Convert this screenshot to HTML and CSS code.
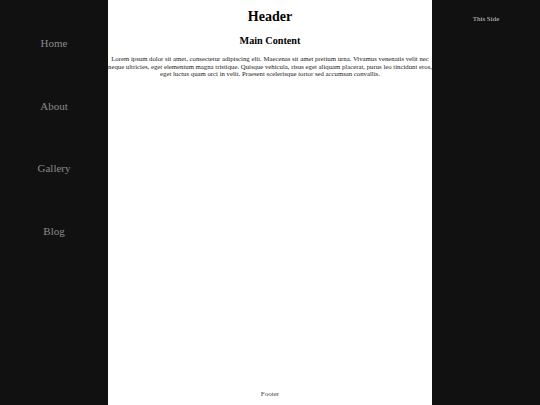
FILE: index.html
```html
<!DOCTYPE html>
<html>
<head>
<meta charset="utf-8">
<link rel="stylesheet" href="styles.css">
</head>
<body>
<div class="layout">
  <nav class="nav">
    <a class="nav-item" href="#">Home</a>
    <a class="nav-item" href="#">About</a>
    <a class="nav-item" href="#">Gallery</a>
    <a class="nav-item" href="#">Blog</a>
  </nav>
  <main class="main">
    <h1 class="title">Header</h1>
    <h2 class="subtitle">Main Content</h2>
    <p class="text">Lorem ipsum dolor sit amet, consectetur adipiscing elit. Maecenas sit amet pretium urna. Vivamus venenatis velit nec neque ultricies, eget elementum magna tristique. Quisque vehicula, risus eget aliquam placerat, purus leo tincidunt eros, eget luctus quam orci in velit. Praesent scelerisque tortor sed accumsan convallis.</p>
    <footer class="footer">Footer</footer>
  </main>
  <aside class="side">This Side</aside>
</div>
</body>
</html>
```
FILE: styles.css
```css
html, body {
  margin: 0;
  padding: 0;
}
body {
  font-family: "Liberation Serif", "Times New Roman", serif;
  font-size: 7px;
  background: #111111;
}
.layout {
  display: grid;
  grid-template-columns: 108px 324px 108px;
  height: 405px;
}
.nav {
  background: #111111;
  display: flex;
  flex-direction: column;
  align-items: center;
  padding-top: 37px;
  gap: 49.6px;
}
.nav-item {
  color: #8a8a8a;
  text-decoration: none;
  font-size: 11px;
  line-height: 13px;
}
.main {
  background: #ffffff;
  display: flex;
  flex-direction: column;
  align-items: stretch;
  text-align: center;
  padding-top: 9px;
  padding-bottom: 7px;
}
.title {
  margin: 0;
  font-size: 14px;
  line-height: 16px;
  color: #000;
}
.subtitle {
  margin: 10px 0 0;
  font-size: 10.2px;
  line-height: 12px;
  color: #000;
}
.text {
  margin: 8px 0 0;
  font-size: 6.75px;
  line-height: 7.6px;
  color: #1a1a1a;
}
.footer {
  margin-top: auto;
  font-size: 7px;
  line-height: 8px;
  color: #444;
}
.side {
  background: #111111;
  color: #cccccc;
  text-align: center;
  padding-top: 15px;
  font-size: 7px;
  line-height: 8px;
}
```
